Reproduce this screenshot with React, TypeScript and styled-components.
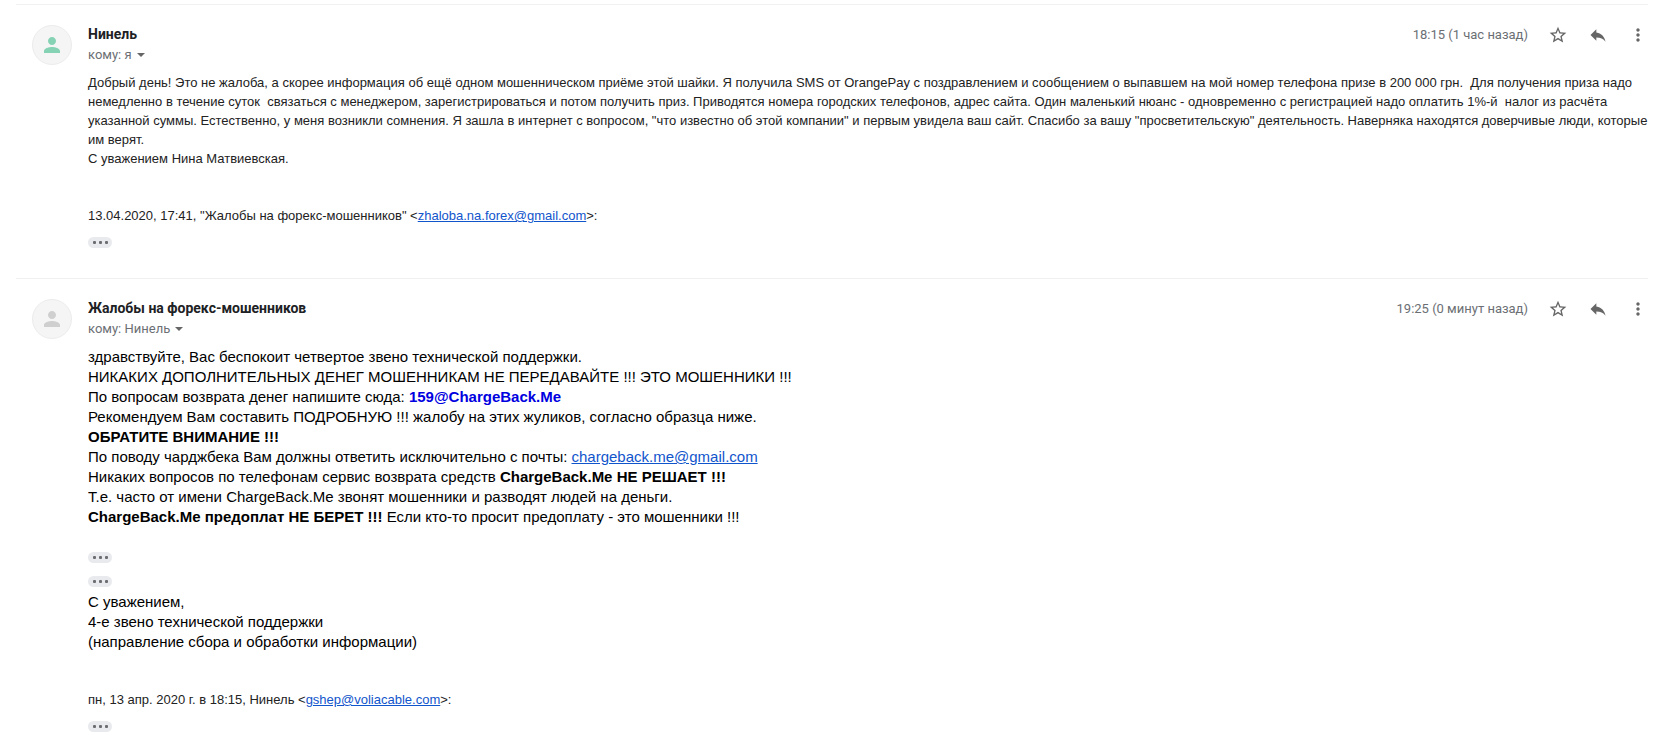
import React from "react";
import styled, { createGlobalStyle } from "styled-components";

const GlobalStyle = createGlobalStyle`
  * { box-sizing: border-box; }
  body {
    margin: 0;
    background: #fff;
    color: #222;
    font-family: Roboto, "Liberation Sans", sans-serif;
  }
`;

const Thread = styled.main`
  padding: 4px 14px 8px 16px;
`;

const Message = styled.article`
  display: grid;
  grid-template-columns: 40px minmax(0, 1fr);
  column-gap: 16px;
  padding: 20px 0 30px 16px;
  border-top: 1px solid #f1f1f1;

  &:last-child { padding-bottom: 0; }
`;

const Avatar = styled.div<{ $tint: string }>`
  display: flex;
  align-items: center;
  justify-content: center;
  width: 40px;
  height: 40px;
  border: 1px solid #ececec;
  border-radius: 50%;
  background: #f5f5f5;
  color: ${(p) => p.$tint};
`;

const Header = styled.header`
  display: flex;
  justify-content: space-between;
  align-items: flex-start;
  height: 40px;
`;

const Sender = styled.h3`
  margin: 0 0 2px;
  font-size: 14px;
  font-weight: 700;
  line-height: 18px;
  color: #202124;
`;

const Recipient = styled.button`
  display: flex;
  align-items: center;
  gap: 5px;
  padding: 0;
  border: 0;
  background: none;
  font: 13px/20px Roboto, "Liberation Sans", sans-serif;
  color: #6b6f74;
  cursor: pointer;
`;

const Caret = styled.span`
  border: 4px solid transparent;
  border-top-color: #666;
  border-bottom: 0;
`;

const Actions = styled.div`
  display: flex;
  align-items: center;
  gap: 20px;
`;

const Time = styled.time`
  font-size: 13px;
  line-height: 20px;
  color: #6b6f74;
`;

const IconButton = styled.button`
  display: flex;
  padding: 0;
  border: 0;
  background: none;
  color: #666;
  cursor: pointer;
`;

const Body = styled.div<{ $large?: boolean }>`
  grid-column: 2;
  margin-top: 8px;
  font-family: "Liberation Sans", Arial, sans-serif;
  font-size: ${(p) => (p.$large ? 15 : 13)}px;
  line-height: ${(p) => (p.$large ? 20 : 19)}px;
  color: ${(p) => (p.$large ? "#000" : "#222")};
`;

const Paragraph = styled.p`
  margin: 0;
`;

const Quote = styled.p`
  margin: 38px 0 12px;
  font-size: 13px;
  line-height: 19px;
  color: #222;
`;

const Link = styled.a`
  color: #15c;
  text-decoration: underline;
`;

const ServiceAddress = styled.a`
  color: #0000e0;
  font-weight: 700;
  text-decoration: none;
`;

const TrimmedGroup = styled.div`
  display: flex;
  flex-direction: column;
  gap: 13px;
  margin: 25px 0 5px;
`;

const Trimmed = styled.button`
  display: flex;
  align-items: center;
  justify-content: center;
  gap: 3px;
  width: 24px;
  height: 11px;
  padding: 0;
  border: 0;
  border-radius: 6px;
  background: #e8eaed;
  cursor: pointer;
`;

const Dot = styled.span`
  width: 3px;
  height: 3px;
  border-radius: 1px;
  background: #6b6d70;
`;

function Icon({ d, size = 20 }: { d: string; size?: number }) {
  return (
    <svg width={size} height={size} viewBox="0 0 24 24" fill="currentColor" aria-hidden="true">
      <path d={d} />
    </svg>
  );
}

const PERSON =
  "M12 12c2.21 0 4-1.79 4-4s-1.79-4-4-4-4 1.79-4 4 1.79 4 4 4zm0 2c-2.67 0-8 1.34-8 4v2h16v-2c0-2.66-5.33-4-8-4z";
const STAR =
  "M22 9.24l-7.19-.62L12 2 9.19 8.63 2 9.24l5.46 4.73L5.82 21 12 17.27 18.18 21l-1.63-7.03L22 9.24zM12 15.4l-3.76 2.27 1-4.28-3.32-2.88 4.38-.38L12 6.1l1.71 4.04 4.38.38-3.32 2.88 1 4.28L12 15.4z";
const REPLY = "M10 9V5l-7 7 7 7v-4.1c5 0 8.5 1.6 11 5.1-1-5-4-10-11-11z";
const MORE =
  "M12 8c1.1 0 2-.9 2-2s-.9-2-2-2-2 .9-2 2 .9 2 2 2zm0 2c-1.1 0-2 .9-2 2s.9 2 2 2 2-.9 2-2-.9-2-2-2zm0 6c-1.1 0-2 .9-2 2s.9 2 2 2 2-.9 2-2-.9-2-2-2z";

function TrimmedToggle() {
  return (
    <Trimmed type="button" aria-label="Показать скрытый текст">
      <Dot />
      <Dot />
      <Dot />
    </Trimmed>
  );
}

function MessageHead(props: { tint: string; name: string; to: string; time: string }) {
  return (
    <>
      <Avatar $tint={props.tint}>
        <Icon d={PERSON} size={24} />
      </Avatar>
      <Header>
        <div>
          <Sender>{props.name}</Sender>
          <Recipient type="button">
            кому: {props.to}
            <Caret />
          </Recipient>
        </div>
        <Actions>
          <Time>{props.time}</Time>
          <IconButton type="button" aria-label="Пометить"><Icon d={STAR} /></IconButton>
          <IconButton type="button" aria-label="Ответить"><Icon d={REPLY} /></IconButton>
          <IconButton type="button" aria-label="Ещё"><Icon d={MORE} /></IconButton>
        </Actions>
      </Header>
    </>
  );
}

export default function App() {
  return (
    <>
      <GlobalStyle />
      <Thread>
        <Message>
          <MessageHead tint="#86d2b4" name="Нинель" to="я" time="18:15 (1 час назад)" />
          <Body>
            <Paragraph>
              Добрый день! Это не жалоба, а скорее информация об ещё одном мошенническом приёме этой шайки. Я
              получила SMS от OrangePay с поздравлением и сообщением о выпавшем на мой номер телефона призе в 200
              000 грн.&nbsp; Для получения приза надо немедленно в течение суток&nbsp; связаться с менеджером,
              зарегистрироваться и потом получить приз. Приводятся номера городских телефонов, адрес сайта. Один
              маленький нюанс - одновременно с регистрацией надо оплатить 1%-й&nbsp; налог из расчёта указанной
              суммы. Естественно, у меня возникли сомнения. Я зашла в интернет с вопросом, "что известно об этой
              компании" и первым увидела ваш сайт. Спасибо за вашу "просветительскую" деятельность. Наверняка
              находятся доверчивые люди, которые им верят.
            </Paragraph>
            <Paragraph>С уважением Нина Матвиевская.</Paragraph>
            <Quote>
              13.04.2020, 17:41, "Жалобы на форекс-мошенников" &lt;
              <Link href="mailto:zhaloba.na.forex@gmail.com">zhaloba.na.forex@gmail.com</Link>&gt;:
            </Quote>
            <TrimmedToggle />
          </Body>
        </Message>

        <Message>
          <MessageHead
            tint="#cfcfcf"
            name="Жалобы на форекс-мошенников"
            to="Нинель"
            time="19:25 (0 минут назад)"
          />
          <Body $large>
            <Paragraph>здравствуйте, Вас беспокоит четвертое звено технической поддержки.</Paragraph>
            <Paragraph>НИКАКИХ ДОПОЛНИТЕЛЬНЫХ ДЕНЕГ МОШЕННИКАМ НЕ ПЕРЕДАВАЙТЕ !!! ЭТО МОШЕННИКИ !!!</Paragraph>
            <Paragraph>
              По вопросам возврата денег напишите сюда:{" "}
              <ServiceAddress href="mailto:159@ChargeBack.Me">159@ChargeBack.Me</ServiceAddress>
            </Paragraph>
            <Paragraph>Рекомендуем Вам составить ПОДРОБНУЮ !!! жалобу на этих жуликов, согласно образца ниже.</Paragraph>
            <Paragraph><b>ОБРАТИТЕ ВНИМАНИЕ !!!</b></Paragraph>
            <Paragraph>
              По поводу чарджбека Вам должны ответить исключительно с почты:{" "}
              <Link href="mailto:chargeback.me@gmail.com">chargeback.me@gmail.com</Link>
            </Paragraph>
            <Paragraph>
              Никаких вопросов по телефонам сервис возврата средств <b>ChargeBack.Me НЕ РЕШАЕТ !!!</b>
            </Paragraph>
            <Paragraph>Т.е. часто от имени ChargeBack.Me звонят мошенники и разводят людей на деньги.</Paragraph>
            <Paragraph>
              <b>ChargeBack.Me предоплат НЕ БЕРЕТ !!!</b> Если кто-то просит предоплату - это мошенники !!!
            </Paragraph>
            <TrimmedGroup>
              <TrimmedToggle />
              <TrimmedToggle />
            </TrimmedGroup>
            <Paragraph>С уважением,</Paragraph>
            <Paragraph>4-е звено технической поддержки</Paragraph>
            <Paragraph>(направление сбора и обработки информации)</Paragraph>
            <Quote>
              пн, 13 апр. 2020 г. в 18:15, Нинель &lt;
              <Link href="mailto:gshep@voliacable.com">gshep@voliacable.com</Link>&gt;:
            </Quote>
            <TrimmedToggle />
          </Body>
        </Message>
      </Thread>
    </>
  );
}
